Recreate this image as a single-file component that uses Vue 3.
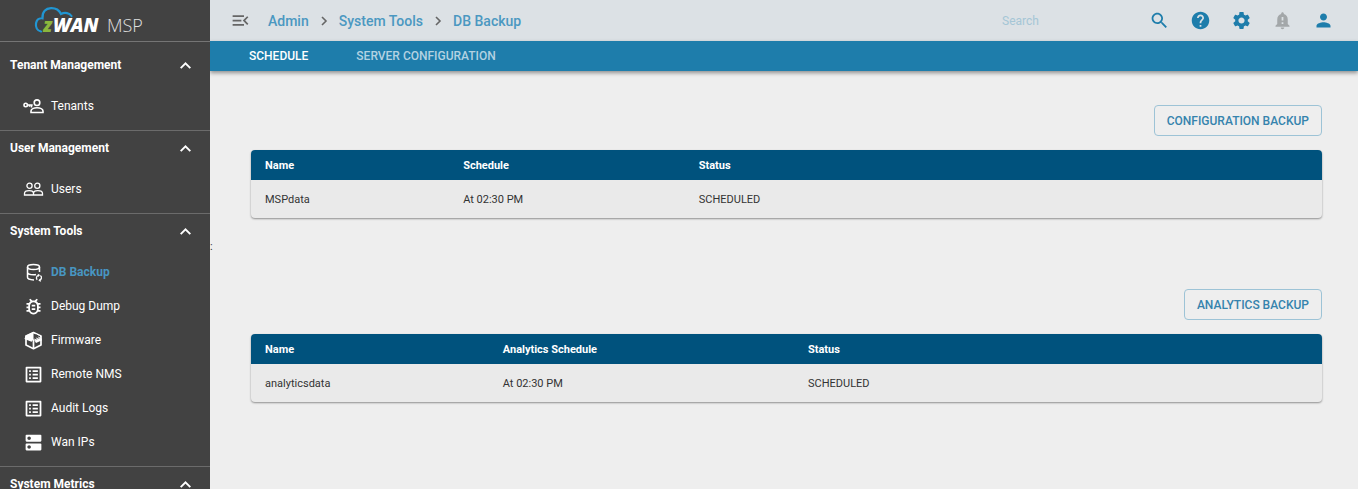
<script setup>
import { ref } from 'vue'

const icons = {
  list: 'M19 5v14H5V5h14m1.1-2H3.9c-.5 0-.9.4-.9.9v16.2c0 .4.4.9.9.9h16.2c.4 0 .9-.5.9-.9V3.9c0-.5-.5-.9-.9-.9zM11 7h6v2h-6V7zm0 4h6v2h-6v-2zm0 4h6v2h-6zM7 7h2v2H7zm0 4h2v2H7zm0 4h2v2H7z',
  dns: 'M20 13H4c-.55 0-1 .45-1 1v6c0 .55.45 1 1 1h16c.55 0 1-.45 1-1v-6c0-.55-.45-1-1-1zM7 19c-1.1 0-2-.9-2-2s.9-2 2-2 2 .9 2 2-.9 2-2 2zM20 3H4c-.55 0-1 .45-1 1v6c0 .55.45 1 1 1h16c.55 0 1-.45 1-1V4c0-.55-.45-1-1-1zM7 9c-1.1 0-2-.9-2-2s.9-2 2-2 2 .9 2 2-.9 2-2 2z',
  bug: 'M20 8h-2.81c-.45-.78-1.07-1.45-1.82-1.96L17 4.41 15.59 3l-2.17 2.17C12.96 5.06 12.49 5 12 5s-.96.06-1.41.17L8.41 3 7 4.41l1.62 1.63C7.88 6.55 7.26 7.22 6.81 8H4v2h2.09c-.05.33-.09.66-.09 1v1H4v2h2v1c0 .34.04.67.09 1H4v2h2.81c1.04 1.79 2.97 3 5.19 3s4.15-1.21 5.19-3H20v-2h-2.09c.05-.33.09-.66.09-1v-1h2v-2h-2v-1c0-.34-.04-.67-.09-1H20V8zm-4 4v3c0 2.21-1.79 4-4 4s-4-1.79-4-4v-4c0-2.21 1.79-4 4-4s4 1.79 4 4v1zm-6 2h4v2h-4zm0-4h4v2h-4z'
}

const sections = [
  { title: 'Tenant Management', items: [{ label: 'Tenants', icon: 'tenants' }] },
  { title: 'User Management', items: [{ label: 'Users', icon: 'users' }] },
  {
    title: 'System Tools',
    items: [
      { label: 'DB Backup', icon: 'db', active: true },
      { label: 'Debug Dump', icon: 'bug' },
      { label: 'Firmware', icon: 'box' },
      { label: 'Remote NMS', icon: 'list' },
      { label: 'Audit Logs', icon: 'list' },
      { label: 'Wan IPs', icon: 'dns' }
    ]
  },
  { title: 'System Metrics', items: [] }
]

const crumbs = ['Admin', 'System Tools', 'DB Backup']

const actions = [
  { label: 'Search', path: 'M15.5 14h-.79l-.28-.27C15.41 12.59 16 11.11 16 9.5 16 5.91 13.09 3 9.5 3S3 5.91 3 9.5 5.91 16 9.5 16c1.61 0 3.09-.59 4.23-1.57l.27.28v.79l5 4.99L20.49 19l-4.99-5zm-6 0C7.01 14 5 11.99 5 9.5S7.01 5 9.5 5 14 7.01 14 9.5 11.99 14 9.5 14z' },
  { label: 'Help', path: 'M12 2C6.48 2 2 6.48 2 12s4.48 10 10 10 10-4.48 10-10S17.52 2 12 2zm1 17h-2v-2h2v2zm2.07-7.75l-.9.92C13.45 12.9 13 13.5 13 15h-2v-.5c0-1.1.45-2.1 1.17-2.83l1.24-1.26c.37-.36.59-.86.59-1.41 0-1.1-.9-2-2-2s-2 .9-2 2H8c0-2.21 1.79-4 4-4s4 1.79 4 4c0 .88-.36 1.68-.93 2.25z' },
  { label: 'Settings', path: 'M19.14 12.94c.04-.3.06-.61.06-.94 0-.32-.02-.64-.07-.94l2.03-1.58c.18-.14.23-.41.12-.61l-1.92-3.32c-.12-.22-.37-.29-.59-.22l-2.39.96c-.5-.38-1.03-.7-1.62-.94l-.36-2.54c-.04-.24-.24-.41-.48-.41h-3.84c-.24 0-.43.17-.47.41l-.36 2.54c-.59.24-1.13.57-1.62.94l-2.39-.96c-.22-.08-.47 0-.59.22L2.74 8.87c-.12.21-.08.47.12.61l2.03 1.58c-.05.3-.09.63-.09.94s.02.64.07.94l-2.03 1.58c-.18.14-.23.41-.12.61l1.92 3.32c.12.22.37.29.59.22l2.39-.96c.5.38 1.03.7 1.62.94l.36 2.54c.05.24.24.41.48.41h3.84c.24 0 .44-.17.47-.41l.36-2.54c.59-.24 1.13-.56 1.62-.94l2.39.96c.22.08.47 0 .59-.22l1.92-3.32c.12-.22.07-.47-.12-.61l-2.01-1.58zM12 15.5c-1.93 0-3.5-1.57-3.5-3.5s1.57-3.5 3.5-3.5 3.5 1.57 3.5 3.5-1.57 3.5-3.5 3.5z' },
  { label: 'Notifications', muted: true, path: 'M18 16v-5c0-3.07-1.64-5.64-4.5-6.32V4c0-.83-.67-1.5-1.5-1.5s-1.5.67-1.5 1.5v.68C7.63 5.36 6 7.92 6 11v5l-2 2v1h16v-1l-2-2zm-5 0h-2v-2h2v2zm0-4h-2V8h2v4zm-1 10c1.1 0 2-.9 2-2h-4c0 1.1.89 2 2 2z' },
  { label: 'Account', path: 'M12 12c2.21 0 4-1.79 4-4s-1.79-4-4-4-4 1.79-4 4 1.79 4 4 4zm0 2c-2.67 0-8 1.34-8 4v2h16v-2c0-2.66-5.33-4-8-4z' }
]

const tabs = ['SCHEDULE', 'SERVER CONFIGURATION']
const activeTab = ref('SCHEDULE')
const query = ref('')

const backups = [
  {
    id: 'configuration',
    button: 'CONFIGURATION BACKUP',
    columns: ['Name', 'Schedule', 'Status'],
    rows: [['MSPdata', 'At 02:30 PM', 'SCHEDULED']]
  },
  {
    id: 'analytics',
    button: 'ANALYTICS BACKUP',
    columns: ['Name', 'Analytics Schedule', 'Status'],
    rows: [['analyticsdata', 'At 02:30 PM', 'SCHEDULED']]
  }
]
</script>

<template>
  <div class="shell">
    <aside class="sidebar">
      <a class="brand" href="#" aria-label="zWAN MSP">
        <svg width="120" height="36" viewBox="0 0 120 36">
          <path d="M7 26.500C3 25.500 1.500 22 2 18.500C2.500 15 5 13 8.500 13.300C8 6.500 12 3.500 17 3.200C22 3 25.500 6 27 9C31 7 35.500 8 37.500 11" fill="none" stroke="#2196d3" stroke-width="2.200" stroke-linecap="round" />
          <text class="logo-z" x="9" y="27">z</text>
          <text class="logo-wan" x="19" y="27">WAN</text>
          <text class="logo-msp" x="73" y="27">MSP</text>
        </svg>
      </a>
      <nav class="sections">
        <section v-for="s in sections" :key="s.title" class="section">
          <button class="section-head" type="button" aria-expanded="true">
            <span>{{ s.title }}</span>
            <svg class="icon" viewBox="0 0 24 24"><path d="M6.500 15L12 9.500L17.500 15" fill="none" stroke="currentColor" stroke-width="2.200" /></svg>
          </button>
          <ul class="items">
            <li v-for="i in s.items" :key="i.label">
              <a class="item" :class="{ active: i.active }" href="#">
                <svg v-if="i.icon === 'tenants'" class="icon" viewBox="0 0 21 21" fill="none" stroke="currentColor" stroke-width="1.600">
                  <circle cx="2.700" cy="9" r="1.700" />
                  <path d="M4.400 9H9.700M8.500 9v2.400M6.500 9v1.800" />
                  <circle cx="14" cy="6.700" r="2.800" />
                  <path d="M8 16.500v-1.400c0-2 3-3.300 6-3.300s6 1.300 6 3.300v1.400z" />
                </svg>
                <svg v-else-if="i.icon === 'users'" class="icon" viewBox="0 0 21 21" fill="none" stroke="currentColor" stroke-width="1.300">
                  <circle cx="6.500" cy="6.800" r="2.600" />
                  <circle cx="14.300" cy="6.800" r="2.600" />
                  <path d="M1.500 16v-1.600c0-1.700 2.200-2.700 4.700-2.700s4.300 1 4.300 2.700V16zM10.500 16v-1.600c0-1.700 1.800-2.700 4.300-2.700s4.700 1 4.700 2.700V16z" />
                </svg>
                <svg v-else-if="i.icon === 'db'" class="icon db" viewBox="0 0 21 21" fill="none" stroke="currentColor" stroke-width="1.500">
                  <ellipse cx="10.500" cy="5" rx="6" ry="2.500" />
                  <path d="M4.500 5v10.300c0 1.400 2.600 2.500 6.500 2.600M16.500 5v5M4.500 10.200c0 1.400 2.800 2.500 6.200 2.500 1 0 1.600 0 2.300-.2" />
                  <path d="M14.200 17.800a2.700 2.700 0 0 1 1.300-4.500M17.400 13.500a2.700 2.700 0 0 1-1.100 4.800" stroke-width="1.300" />
                  <path d="M14.700 11.700l2.400 1.400-1.900 2zM17.800 20l-2.400-1.400 1.900-2z" fill="currentColor" stroke="none" />
                </svg>
                <svg v-else-if="i.icon === 'box'" class="icon" viewBox="0 0 21 21" fill="none" stroke="currentColor" stroke-width="1.700" stroke-linejoin="round">
                  <path d="M10.500 2.500L3 6v9l7.500 3.700L18 15V6z" />
                  <path d="M10.500 10v8.500M10.500 10L18 6" />
                  <path d="M10.500 2L2.500 5.700 1.500 9l7 2.800 2-2.300zM11.500 10.500l6.500-3 1 2.700-6 2.800z" fill="currentColor" stroke="none" />
                  <path d="M11 9.200L17 6.200M12.500 4.500l3 1.500" stroke="#424242" stroke-width="1" />
                </svg>
                <svg v-else class="icon" viewBox="0 0 24 24"><path :d="icons[i.icon]" fill="currentColor" /></svg>
                <span>{{ i.label }}</span>
              </a>
            </li>
          </ul>
        </section>
      </nav>
      <span class="resizer">:</span>
    </aside>

    <div class="content">
      <header class="topbar">
        <button class="icon-button menu" type="button" aria-label="Collapse menu">
          <svg class="icon" viewBox="0 0 24 24"><path fill="currentColor" d="M3 18h13v-2H3v2zm0-5h10v-2H3v2zm0-7v2h13V6H3zm18 9.590L17.420 12 21 8.410 19.590 7l-5 5 5 5L21 15.590z" /></svg>
        </button>
        <nav class="crumbs" aria-label="Breadcrumb">
          <template v-for="(c, n) in crumbs" :key="c">
            <svg v-if="n" class="separator" viewBox="0 0 8 12"><path d="M2 2l4 4-4 4" fill="none" stroke="currentColor" stroke-width="1.600" /></svg>
            <a href="#">{{ c }}</a>
          </template>
        </nav>
        <input v-model="query" class="search" type="search" placeholder="Search" aria-label="Search">
        <div class="actions">
          <button v-for="a in actions" :key="a.label" class="icon-button" :class="{ muted: a.muted }" type="button" :aria-label="a.label">
            <svg class="icon" viewBox="0 0 24 24"><path :d="a.path" fill="currentColor" /></svg>
          </button>
        </div>
      </header>

      <div class="tabs" role="tablist">
        <button
          v-for="t in tabs" :key="t" class="tab" :class="{ selected: t === activeTab }"
          type="button" role="tab" :aria-selected="t === activeTab" @click="activeTab = t"
        >{{ t }}</button>
      </div>

      <main class="main">
        <section v-for="b in backups" :key="b.id" class="backup">
          <button class="outlined" type="button">{{ b.button }}</button>
          <div class="card">
            <table :class="b.id">
              <colgroup><col class="col-name"><col class="col-schedule"><col></colgroup>
              <thead>
                <tr><th v-for="c in b.columns" :key="c" scope="col">{{ c }}</th></tr>
              </thead>
              <tbody>
                <tr v-for="r in b.rows" :key="r[0]"><td v-for="v in r" :key="v">{{ v }}</td></tr>
              </tbody>
            </table>
          </div>
        </section>
      </main>
    </div>
  </div>
</template>

<style>
body {
  background: #eeeeee;
}
</style>

<style scoped>
.shell,
.shell * {
  box-sizing: border-box;
}
.shell {
  display: flex;
  height: 100vh;
  font-family: Roboto, "Liberation Sans", sans-serif;
  font-size: 12px;
  color: #333;
}
button,
input {
  font-family: inherit;
  border: 0;
  background: none;
  padding: 0;
  margin: 0;
}
button {
  cursor: pointer;
}
a {
  color: inherit;
  text-decoration: none;
}
.icon {
  display: block;
  flex: none;
  width: 21px;
  height: 21px;
}

.sidebar {
  position: relative;
  flex: none;
  display: flex;
  flex-direction: column;
  width: 210px;
  background: #424242;
  color: #fff;
}
.brand {
  flex: none;
  display: flex;
  padding: 5px 34px 0;
  border-bottom: 1px solid #757575;
}
.logo-z,
.logo-wan {
  font-family: "Open Sans", sans-serif;
  font-weight: 800;
  font-style: italic;
  font-size: 19px;
  fill: #fff;
}
.logo-z {
  fill: #8cb63c;
}
.logo-msp {
  font-family: "Open Sans", sans-serif;
  font-weight: 300;
  font-size: 18px;
  fill: #e0e0e0;
}
.sections {
  padding-top: 6px;
  overflow: hidden;
}
.section + .section {
  border-top: 1px solid #6b6b6b;
}
.section-head {
  display: flex;
  align-items: center;
  justify-content: space-between;
  width: 100%;
  height: 34px;
  padding: 0 14px 0 10px;
  font-size: 12px;
  font-weight: 700;
  color: #fff;
}
.items {
  list-style: none;
  margin: 0;
  padding: 7px 0;
}
.item {
  display: flex;
  align-items: center;
  gap: 7px;
  height: 34px;
  padding-left: 23px;
  font-size: 12px;
}
.item.active {
  color: #4896c1;
  font-weight: 700;
}
.icon.db {
  color: #fff;
}
.resizer {
  position: absolute;
  left: 100%;
  top: 240px;
  font-size: 11px;
  line-height: 14px;
  color: #333;
}

.content {
  flex: 1;
  min-width: 0;
}
.topbar {
  display: flex;
  align-items: center;
  height: 41px;
  padding: 0 24px 0 20px;
  background: #dce1e5;
}
.icon-button {
  color: #1e7dab;
}
.icon-button.menu {
  color: #666;
}
.icon-button.muted {
  color: #a3a7a9;
}
.crumbs {
  display: flex;
  align-items: center;
  gap: 11px;
  margin-left: 17px;
  font-size: 14px;
  line-height: 18px;
  font-weight: 500;
  color: #4b98c1;
}
.separator {
  width: 8px;
  height: 12px;
  color: #666;
}
.search {
  width: 120px;
  margin-left: auto;
  margin-right: 27px;
  font-size: 12px;
  color: #1e7dab;
  outline: none;
}
.search::placeholder {
  color: #a5c6d6;
  opacity: 1;
}
.actions {
  display: flex;
  gap: 20px;
}

.tabs {
  display: flex;
  padding-left: 15px;
  background: #1e7dab;
  box-shadow: 0 2px 4px rgba(0, 0, 0, 0.4);
}
.tab {
  height: 30px;
  padding: 0 24px;
  font-size: 12px;
  font-weight: 500;
  color: #b3d2e2;
}
.tab.selected {
  color: #fff;
}

.main {
  padding: 34px 36px 34px 41px;
}
.backup {
  display: flex;
  flex-direction: column;
  align-items: flex-end;
  gap: 14px;
}
.backup + .backup {
  margin-top: 71px;
}
.outlined {
  height: 31px;
  padding: 0 12px;
  border: 1px solid #9dc3d6;
  border-radius: 4px;
  font-size: 12px;
  font-weight: 500;
  color: #3583ad;
}
.card {
  width: 100%;
  border-radius: 4px;
  overflow: hidden;
  background: #eaeaea;
  box-shadow: 0 1px 2px rgba(0, 0, 0, 0.4);
}
table {
  width: 100%;
  table-layout: fixed;
  border-collapse: collapse;
  text-align: left;
}
.configuration .col-name {
  width: 18.5%;
}
.configuration .col-schedule {
  width: 22%;
}
.analytics .col-name {
  width: 22.2%;
}
.analytics .col-schedule {
  width: 28.5%;
}
th,
td {
  padding: 0 14px;
  font-size: 11px;
}
th {
  height: 30px;
  background: #00527d;
  color: #fff;
  font-weight: 700;
}
td {
  height: 38px;
  color: #333;
}
</style>
